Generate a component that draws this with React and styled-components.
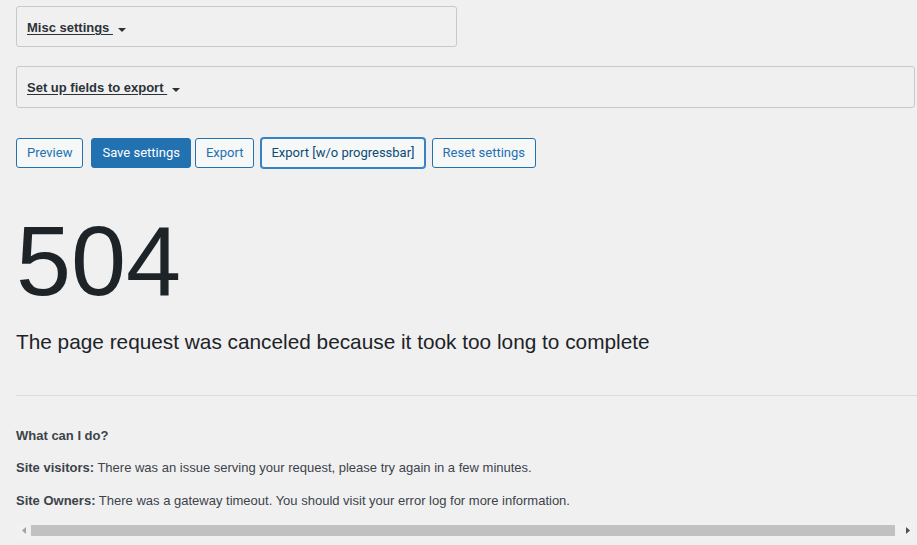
import React from 'react';
import styled, { createGlobalStyle, css } from 'styled-components';

const GlobalStyle = createGlobalStyle`
  html, body {
    margin: 0;
    padding: 0;
    background: #f0f0f1;
    overflow: hidden;
  }
  body {
    font-family: "Liberation Sans", Arial, sans-serif;
    color: #3c434a;
    font-size: 13px;
  }
`;

const Page = styled.div`
  padding: 6px 2px 0 16px;
  display: flex;
  flex-direction: column;
`;

const Panel = styled.div`
  width: ${p => (p.$narrow ? '441px' : 'auto')};
  box-sizing: border-box;
  border: 1px solid #c9c9c9;
  border-radius: 3px;
  padding: 11px 10px ${p => p.$padBottom}px;
  margin-top: ${p => p.$top}px;
  display: flex;
  align-items: center;
`;

const PanelToggle = styled.a`
  font-weight: 700;
  font-size: 13px;
  line-height: 20px;
  color: #2c3338;
  text-decoration: underline;
  text-underline-offset: 2px;
  white-space: pre;
  cursor: pointer;
`;

const Caret = styled.span`
  width: 0;
  height: 0;
  margin-left: 5px;
  margin-top: 3px;
  border-left: 4px solid transparent;
  border-right: 4px solid transparent;
  border-top: 4px solid #2c3338;
`;

const ButtonRow = styled.div`
  display: flex;
  margin-top: 30px;
`;

const Button = styled.button`
  font-family: Roboto, "Liberation Sans", sans-serif;
  font-size: 13px;
  line-height: 28px;
  min-height: 30px;
  padding: 0 10px;
  margin: 0 0 0 ${p => p.$gap || 0}px;
  border: 1px solid #2271b1;
  border-radius: 3px;
  background: #f6f7f7;
  color: #2271b1;
  white-space: nowrap;
  cursor: pointer;

  ${p =>
    p.$primary &&
    css`
      background: #2271b1;
      color: #fff;
    `}

  ${p =>
    p.$focused &&
    css`
      padding: 0 9px;
      border-color: #3582c4;
      color: #0a4b78;
      box-shadow: 0 0 0 1px #3582c4;
    `}
`;

const ErrorBlock = styled.section`
  display: flex;
  flex-direction: column;
  margin-top: 43px;
`;

const ErrorCode = styled.h1`
  margin: 0;
  font-size: 99px;
  line-height: 1;
  font-weight: 400;
  color: #1d2327;
  letter-spacing: 0;
`;

const ErrorTitle = styled.h2`
  margin: 20px 0 0;
  font-size: 20.8px;
  line-height: 1.2;
  font-weight: 400;
  color: #1d2327;
`;

const Divider = styled.hr`
  margin: 40px -2px 0 0;
  border: 0;
  border-top: 1px solid #dcdcde;
  height: 0;
`;

const Para = styled.p`
  margin: ${p => p.$top}px 0 0;
  font-size: 13px;
  line-height: 1.5;
  color: #3c434a;

  strong {
    font-weight: 700;
  }
`;

const Scrollbar = styled.div`
  display: flex;
  align-items: center;
  height: 15px;
  margin-top: 13px;
  background: #f1f1f1;
`;

const ScrollArrow = styled.span`
  width: 15px;
  height: 15px;
  display: flex;
  align-items: center;
  justify-content: center;
  flex: none;
`;

const Thumb = styled.div`
  flex: 1;
  height: 11px;
  margin-right: 5px;
  background: #c1c1c1;
`;

const Arrow = ({ dir, color }) => (
  <svg width="4" height="7" viewBox="0 0 4 7">
    {dir === 'left' ? (
      <polygon points="4,0 4,7 0,3.5" fill={color} />
    ) : (
      <polygon points="0,0 0,7 4,3.5" fill={color} />
    )}
  </svg>
);

export default function App() {
  return (
    <>
      <GlobalStyle />
      <Page>
        <Panel $narrow $top={0} $padBottom={8}>
          <PanelToggle>{'Misc settings '}</PanelToggle>
          <Caret />
        </Panel>
        <Panel $top={19} $padBottom={9}>
          <PanelToggle>{'Set up fields to export '}</PanelToggle>
          <Caret />
        </Panel>

        <ButtonRow>
          <Button>Preview</Button>
          <Button $primary $gap={8}>Save settings</Button>
          <Button $gap={4}>Export</Button>
          <Button $focused $gap={7}>Export [w/o progressbar]</Button>
          <Button $gap={7}>Reset settings</Button>
        </ButtonRow>

        <ErrorBlock>
          <ErrorCode>504</ErrorCode>
          <ErrorTitle>The page request was canceled because it took too long to complete</ErrorTitle>
          <Divider />
          <Para $top={30}>
            <strong>What can I do?</strong>
          </Para>
          <Para $top={13}>
            <strong>Site visitors:</strong> There was an issue serving your request, please try again in a few minutes.
          </Para>
          <Para $top={13}>
            <strong>Site Owners:</strong> There was a gateway timeout. You should visit your error log for more information.
          </Para>
        </ErrorBlock>

        <Scrollbar>
          <ScrollArrow>
            <Arrow dir="left" color="#a3a3a3" />
          </ScrollArrow>
          <Thumb />
          <ScrollArrow>
            <Arrow dir="right" color="#505050" />
          </ScrollArrow>
        </Scrollbar>
      </Page>
    </>
  );
}
